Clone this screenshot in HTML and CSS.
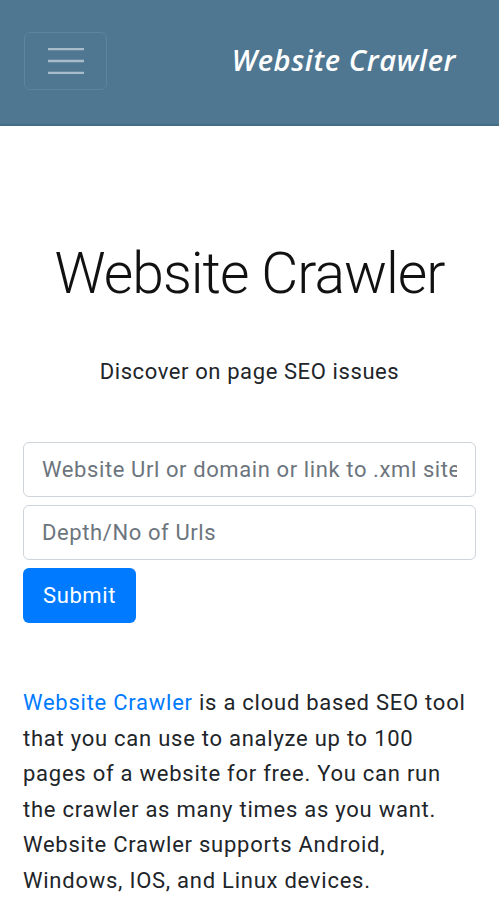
FILE: index.html
```html
<!DOCTYPE html>
<html lang="en">
<head>
    <meta charset="UTF-8">
    <meta name="viewport" content="width=device-width, initial-scale=1.0">
    <title>Website Crawler</title>
    <link rel="stylesheet" href="styles.css">
</head>
<body>

    <nav class="navbar">
        <button class="toggler" type="button" aria-label="Toggle navigation">
            <svg width="36" height="26" viewBox="0 0 36 26">
                <path d="M0 1h36M0 13h36M0 25h36" stroke="#a9bccb" stroke-width="2.4" fill="none"/>
            </svg>
        </button>
        <a class="brand" href="#">Website Crawler</a>
    </nav>

    <main class="container">
        <h1 class="title">Website Crawler</h1>
        <p class="lead">Discover on page SEO issues</p>

        <form class="crawl-form">
            <input type="text" class="field" placeholder="Website Url or domain or link to .xml sitemap">
            <input type="text" class="field" placeholder="Depth/No of Urls">
            <button type="submit" class="submit-btn">Submit</button>
        </form>

        <p class="about">
            <a href="#">Website Crawler</a> is a cloud based SEO tool that you can use to analyze up to 100 pages of a website for free. You can run the crawler as many times as you want. Website Crawler supports Android, Windows, IOS, and Linux devices.
        </p>
    </main>

</body>
</html>
```

FILE: styles.css
```css
* {
    box-sizing: border-box;
}

body {
    margin: 0;
    font-family: Roboto, "Liberation Sans", sans-serif;
    color: #212529;
    background: #fff;
}

.navbar {
    height: 126px;
    background-color: #4f7791;
    border-bottom: 2px solid #456c85;
    display: flex;
    align-items: center;
    justify-content: space-between;
    padding: 0 43px 0 24px;
}

.toggler {
    width: 83px;
    height: 58px;
    margin-top: -3px;
    background: transparent;
    border: 1px solid #5f849c;
    border-radius: 6px;
    display: flex;
    align-items: center;
    justify-content: center;
    padding: 0;
}

.brand {
    color: #fff;
    text-decoration: none;
    font-family: "Open Sans", sans-serif;
    font-style: italic;
    font-weight: 600;
    font-size: 29px;
    letter-spacing: 0.6px;
    margin-top: -6px;
}

.container {
    padding: 0 23px;
}

.title {
    font-family: Roboto, sans-serif;
    font-weight: 300;
    color: #111;
    font-size: 57px;
    text-align: center;
    margin: 114px 0 0;
    letter-spacing: -1px;
}

.lead {
    font-size: 22px;
    letter-spacing: 0.6px;
    text-align: center;
    margin: 52px 0 0;
}

.crawl-form {
    margin-top: 58px;
    display: flex;
    flex-direction: column;
    align-items: flex-start;
    gap: 8px;
}

.field {
    width: 100%;
    height: 55px;
    padding: 0 18px;
    font-family: Roboto, sans-serif;
    font-size: 22px;
    letter-spacing: 0.6px;
    color: #495057;
    border: 1px solid #ced4da;
    border-radius: 6px;
}

.field::placeholder {
    color: #6c757d;
}

.submit-btn {
    height: 55px;
    padding: 0 20px;
    background-color: #007bff;
    color: #fff;
    font-family: Roboto, sans-serif;
    font-size: 22px;
    letter-spacing: 0.6px;
    border: none;
    border-radius: 6px;
}

.about {
    font-size: 22px;
    letter-spacing: 0.75px;
    line-height: 35.6px;
    margin: 62px 0 0;
}

.about a {
    color: #007bff;
    text-decoration: none;
}
```
